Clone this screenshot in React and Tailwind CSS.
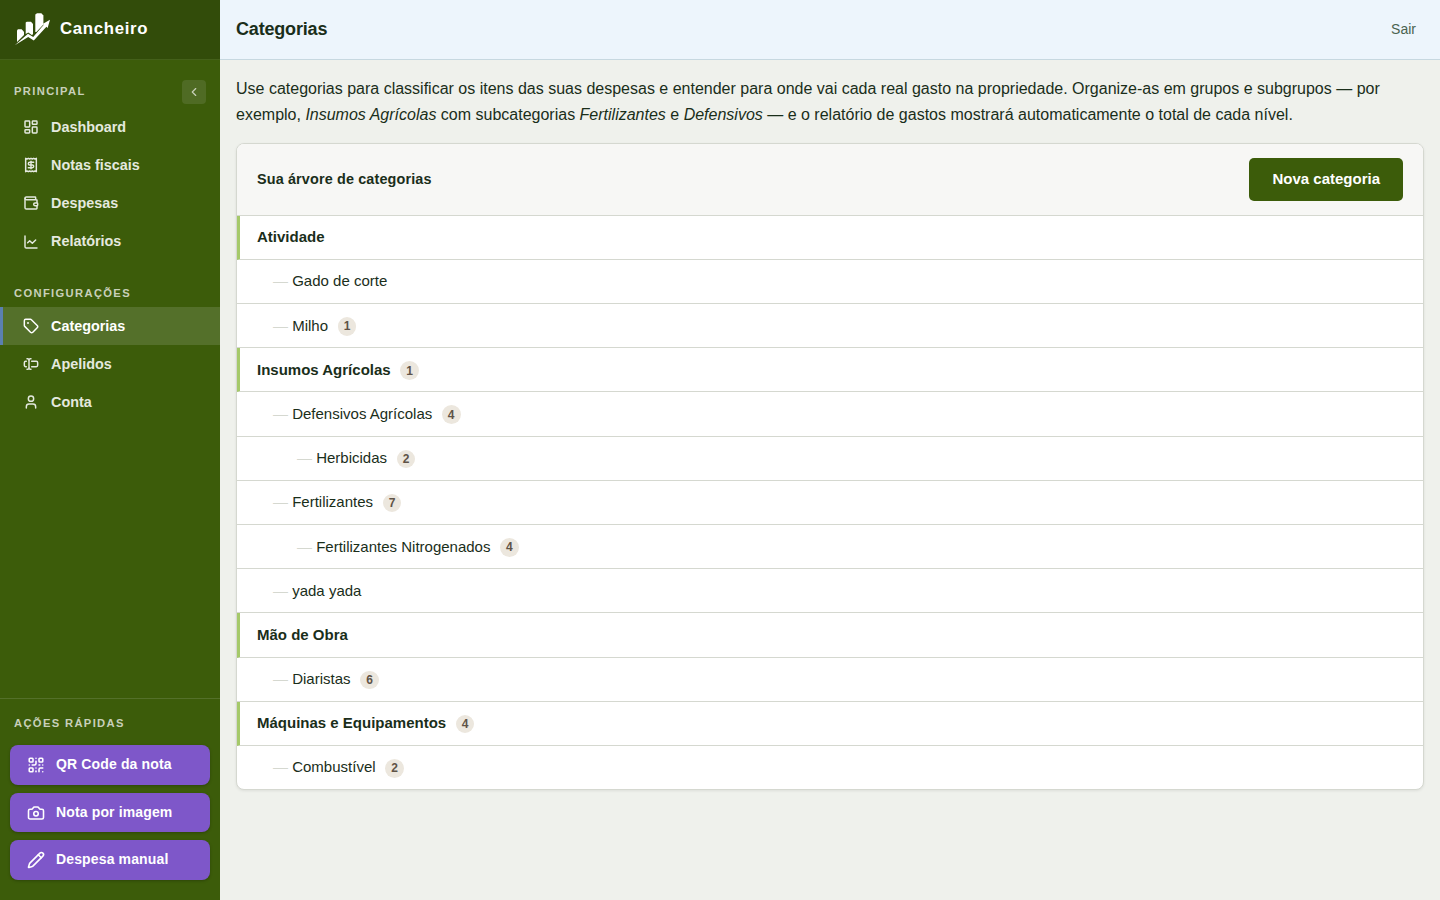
import {
  LayoutDashboard, Receipt, Wallet, ChartLine, Tag, TextCursorInput, User,
  QrCode, Camera, Pencil, ChevronLeft,
} from "lucide-react";

const mainNav = [
  { label: "Dashboard", Icon: LayoutDashboard },
  { label: "Notas fiscais", Icon: Receipt },
  { label: "Despesas", Icon: Wallet },
  { label: "Relatórios", Icon: ChartLine },
];
const settingsNav = [
  { label: "Categorias", Icon: Tag, active: true },
  { label: "Apelidos", Icon: TextCursorInput },
  { label: "Conta", Icon: User },
];
const actions = [
  { label: "QR Code da nota", Icon: QrCode },
  { label: "Nota por imagem", Icon: Camera },
  { label: "Despesa manual", Icon: Pencil },
];
const categories = [
  { name: "Atividade", level: 0 },
  { name: "Gado de corte", level: 1 },
  { name: "Milho", level: 1, count: 1 },
  { name: "Insumos Agrícolas", level: 0, count: 1 },
  { name: "Defensivos Agrícolas", level: 1, count: 4 },
  { name: "Herbicidas", level: 2, count: 2 },
  { name: "Fertilizantes", level: 1, count: 7 },
  { name: "Fertilizantes Nitrogenados", level: 2, count: 4 },
  { name: "yada yada", level: 1 },
  { name: "Mão de Obra", level: 0 },
  { name: "Diaristas", level: 1, count: 6 },
  { name: "Máquinas e Equipamentos", level: 0, count: 4 },
  { name: "Combustível", level: 1, count: 2 },
];
const indent = ["border-l-[3px] border-l-[#a5c96a] pl-[17px] font-bold", "pl-9", "pl-[60px]"];

function Logo() {
  return (
    <svg width="36" height="36" viewBox="0 0 36 36" fill="#fff">
      <path d="M3 30V18.2L4 17.2H7.6L10 19.8V23L6 27Z" />
      <path d="M11.7 22V10.4L12.8 9.8H17L19 12V22.2L17.8 23L14.3 20.4Z" />
      <path d="M21.3 20V2.4L23 1.2H27.4L29.4 3.4V12.4L22.4 20Z" />
      <path d="M.8 33.3L14 21.8L19.2 25L29.8 12.8L28.6 12L36 7.8L33.6 16L32.4 14.8L19.8 28.4L14.2 25Z" />
    </svg>
  );
}

function NavItem({ label, Icon, active }) {
  return (
    <a className={`flex h-[38.05px] items-center gap-3 border-l-[3px] pl-5 text-[14.4px] font-bold ${active ? "border-[#5b80b0] bg-[#54702a] text-white" : "border-transparent text-[#e4e9df]"}`}>
      <Icon size={16} strokeWidth={2.2} />
      <span className="pt-px">{label}</span>
    </a>
  );
}

function Heading({ children }) {
  return <h2 className="text-[11.2px] leading-4 font-bold tracking-[1.35px] text-[#c8d0ba]">{children}</h2>;
}

export default function App() {
  return (
    <div className="flex h-[900px] w-[1440px] overflow-hidden bg-[#eff1ec] font-['Liberation_Sans',sans-serif] text-[#1a2e1a]">
      <aside className="flex w-[220px] shrink-0 flex-col bg-[#3c5c0a]">
        <div className="flex h-[60px] shrink-0 items-center gap-2.5 border-b border-[#44601a] bg-[#324c0a] pl-3.5">
          <Logo />
          <span className="pb-0.5 text-[16.8px] font-bold tracking-[0.67px] text-white">Cancheiro</span>
        </div>
        <div className="flex items-center justify-between pt-5 pr-3.5 pl-3.5">
          <div className="pb-0.5"><Heading>PRINCIPAL</Heading></div>
          <button className="flex size-6 items-center justify-center rounded bg-[#4f6b24] text-[#c8d0ba]">
            <ChevronLeft size={14} />
          </button>
        </div>
        <nav className="pt-[4.35px]">{mainNav.map((n) => <NavItem key={n.label} {...n} />)}</nav>
        <div className="pt-[24.4px] pl-3.5"><Heading>CONFIGURAÇÕES</Heading></div>
        <nav className="pt-1.5">{settingsNav.map((n) => <NavItem key={n.label} {...n} />)}</nav>
        <div className="mt-auto border-t border-[#54702a] px-2.5 pt-4 pb-5">
          <div className="pl-1"><Heading>AÇÕES RÁPIDAS</Heading></div>
          <div className="mt-3.5 flex flex-col gap-2">
            {actions.map(({ label, Icon }) => (
              <button key={label} className="flex h-[39.6px] items-center gap-[11px] rounded-lg bg-[#7e57c9] pl-[17px] text-[14px] font-bold tracking-[0.14px] text-white shadow-[0_1px_3px_rgba(0,0,0,0.25)]">
                <Icon size={18} strokeWidth={2.1} /><span className="pb-px">{label}</span>
              </button>
            ))}
          </div>
        </div>
      </aside>
      <div className="flex min-w-0 flex-1 flex-col">
        <header className="flex h-[60px] shrink-0 items-center justify-between border-b border-[#c7d8e0] bg-[#edf5fc] pr-6 pl-4">
          <h1 className="text-[18px] font-bold tracking-[-0.18px]">Categorias</h1>
          <a className="text-[14px] text-[#4a6350]">Sair</a>
        </header>
        <main className="px-4 pt-4">
          <p className="text-[16px] leading-[25.6px]">
            Use categorias para classificar os itens das suas despesas e entender para onde vai cada real gasto na propriedade. Organize-as em grupos e subgrupos — por exemplo, <em>Insumos Agrícolas</em> com subcategorias <em>Fertilizantes</em> e <em>Defensivos</em> — e o relatório de gastos mostrará automaticamente o total de cada nível.
          </p>
          <section className="mt-4 overflow-hidden rounded-lg border border-[#d5d8d0] bg-white shadow-[0_1px_3px_rgba(0,0,0,0.08)]">
            <div className="flex h-[71.45px] items-center justify-between border-b border-[#d5d8d0] bg-[#f7f7f5] pr-5 pl-5">
              <h2 className="text-[14.4px] font-bold tracking-[0.144px]">Sua árvore de categorias</h2>
              <button className="h-[42.5px] rounded-[5px] bg-[#3c5c0a] px-[23px] text-[15px] font-bold text-white">Nova categoria</button>
            </div>
            <ul>
              {categories.map((c) => (
                <li key={c.name} className={`flex h-[44.2px] items-center border-b border-b-[#d5d8d0] pt-[0.54px] text-[15px] last:h-[43.2px] last:border-b-0 ${indent[c.level]}`}>
                  {c.level > 0 && <span className="mr-[4.2px] text-[#d5d8d0]">—</span>}
                  <span>{c.name}</span>
                  {c.count && <span className="mt-px ml-[9.6px] flex h-[18.7px] min-w-[18.7px] items-center justify-center rounded-full bg-[#ece7de] text-[12px] font-bold text-[#5f5347]">{c.count}</span>}
                </li>
              ))}
            </ul>
          </section>
        </main>
      </div>
    </div>
  );
}
